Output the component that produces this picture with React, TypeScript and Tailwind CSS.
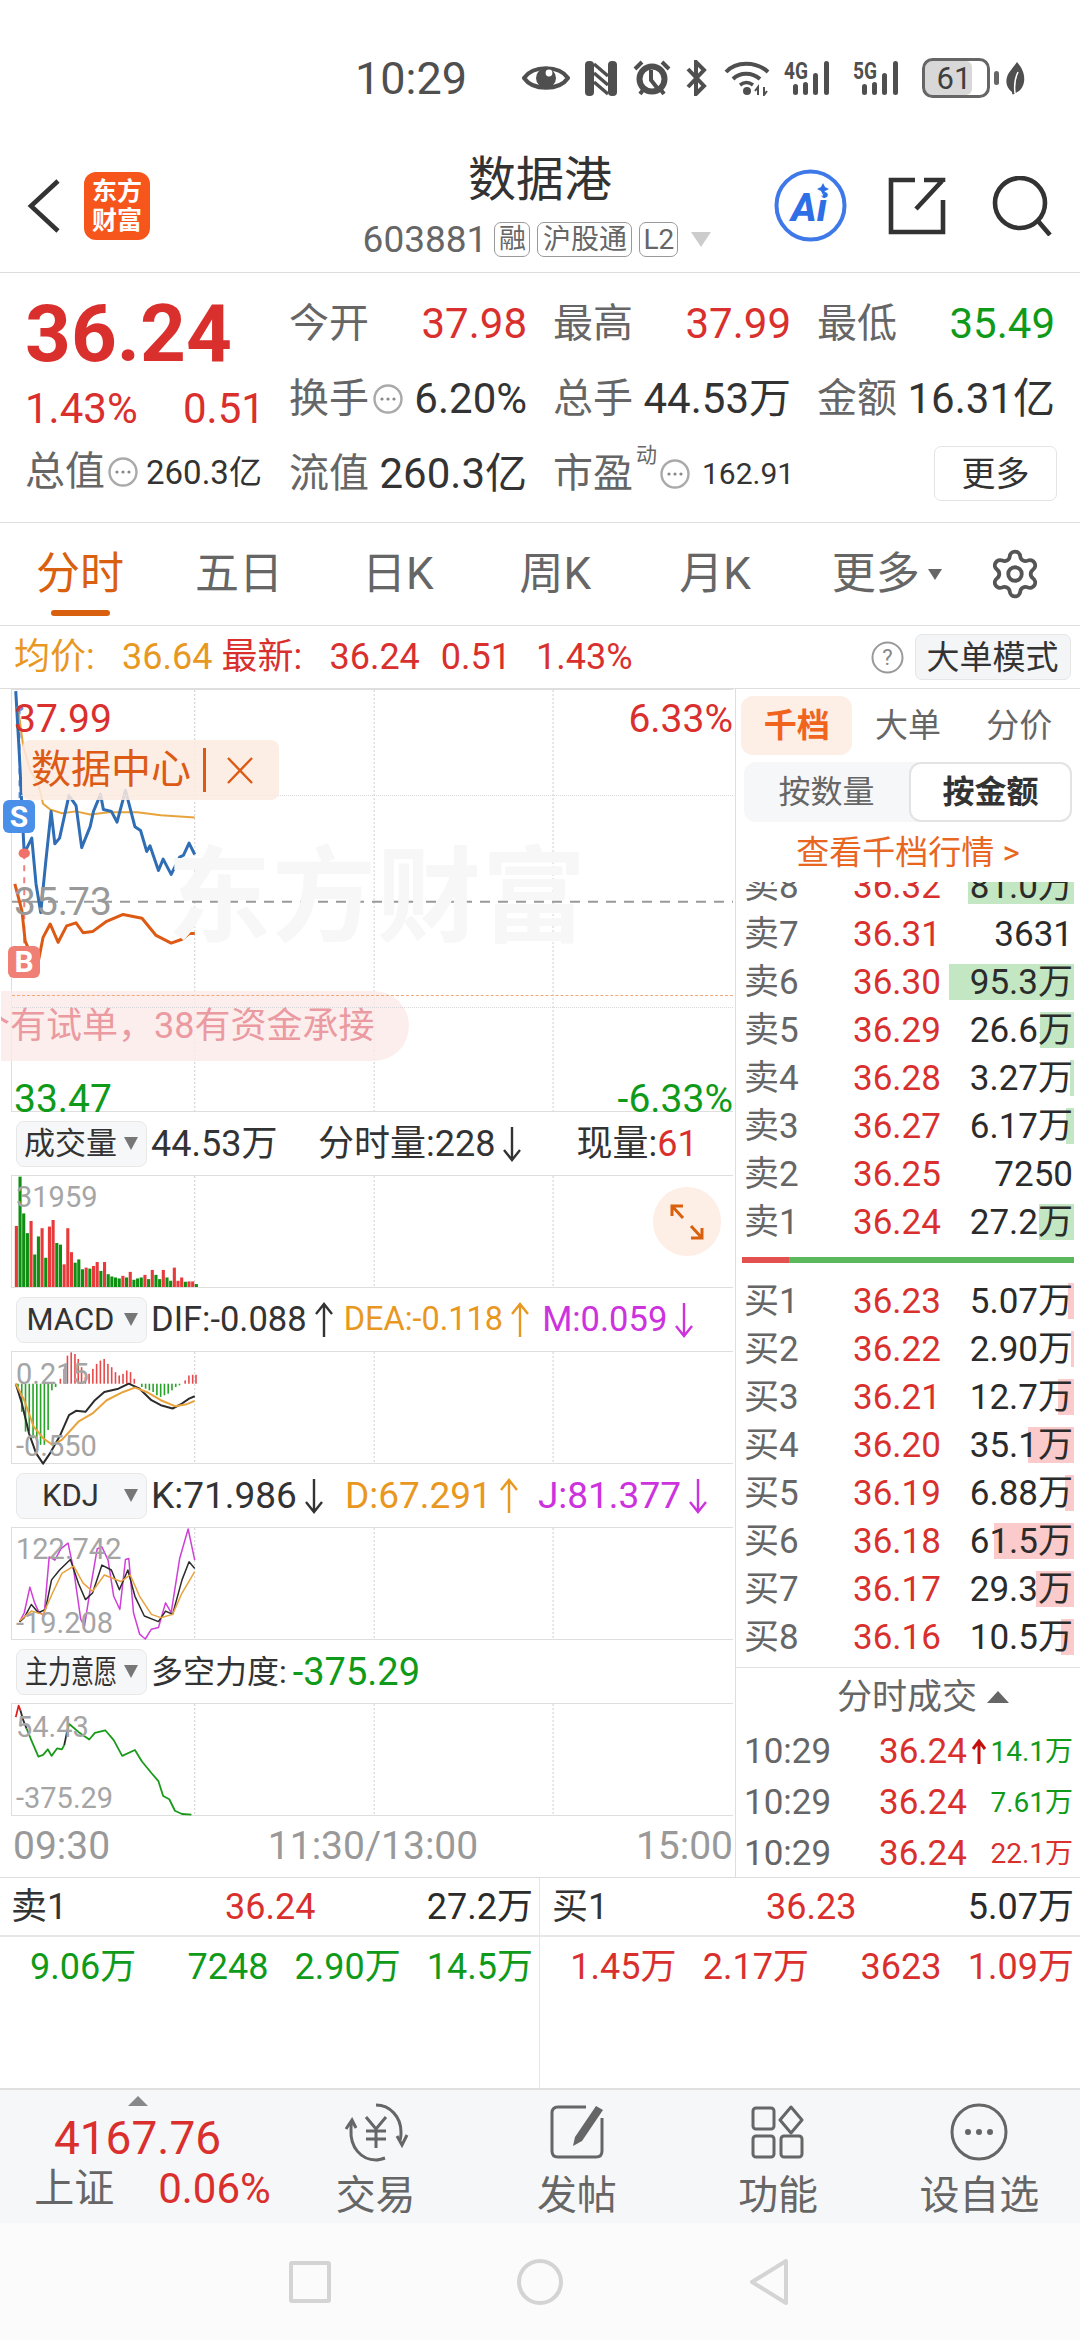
import React from 'react';
import { Settings } from 'lucide-react';

const RED = 'text-[#d9302e]';
const GREEN = 'text-[#0f9a1a]';

function Dots({ size = 30 }: { size?: number }) {
  return (
    <svg width={size} height={size} viewBox="0 0 30 30" className="shrink-0">
      <circle cx="15" cy="15" r="13.5" fill="#fff" stroke="#aaa" strokeWidth="2.4" />
      <circle cx="9" cy="15" r="1.6" fill="#888" />
      <circle cx="15" cy="15" r="1.6" fill="#888" />
      <circle cx="21" cy="15" r="1.6" fill="#888" />
    </svg>
  );
}

function Arrow({ up = false, color = '#333' }: { up?: boolean; color?: string }) {
  return (
    <svg width="22" height="38" viewBox="0 0 22 38" className="ml-[6px] shrink-0">
      {up ? (
        <path d="M11 36V3M3 13L11 3L19 13" fill="none" stroke={color} strokeWidth="2.4" />
      ) : (
        <path d="M11 2V35M3 25L11 35L19 25" fill="none" stroke={color} strokeWidth="2.4" />
      )}
    </svg>
  );
}

function Chip({ label, squeeze = false }: { label: string; squeeze?: boolean }) {
  return (
    <div className="ml-[16px] mr-[4px] flex h-[46px] w-[131px] shrink-0 items-center rounded-[8px] border border-[#e8e8e8] bg-[#f6f7f9] pl-[7px] text-[31px] leading-none text-[#333]">
      <span className="flex w-[93px] justify-center whitespace-nowrap">
        <span className={squeeze ? 'inline-block shrink-0 scale-x-[0.72] text-[32px]' : 'inline-block shrink-0'}>{label}</span>
      </span>
      <span className="ml-[7px] h-0 w-0 border-x-[7px] border-t-[13px] border-x-transparent border-t-[#777]" />
    </div>
  );
}

function Chart({
  minY,
  maxY,
  h,
  children,
  labels,
}: {
  minY: number;
  maxY: number;
  h: string;
  children?: React.ReactNode;
  labels?: React.ReactNode;
}) {
  return (
    <div className={`relative ml-[11px] w-[722px] border-y border-l border-y-[#dedede] border-l-[#dedede] ${h}`}>
      <svg
        className="block h-full w-full overflow-visible"
        viewBox={`24 ${minY} 1531 ${maxY - minY}`}
        preserveAspectRatio="none"
      >
        {[412, 793, 1173].map((x) => (
          <line key={x} x1={x} x2={x} y1={minY} y2={maxY} stroke="#cfcfcf" strokeWidth="1" strokeDasharray="2 2" vectorEffect="non-scaling-stroke" />
        ))}
        {children}
      </svg>
      {labels}
    </div>
  );
}

function L({ p, c, w = 2 }: { p: string; c: string; w?: number }) {
  return <polyline points={p} fill="none" stroke={c} strokeWidth={w} strokeLinejoin="round" vectorEffect="non-scaling-stroke" />;
}

const volBars: [number, string][] = [
  [348, 'r'], [198, 'g'], [310, 'g'], [370, 'g'], [333, 'r'], [435, 'g'], [380, 'g'], [355, 'r'], [445, 'g'], [350, 'r'],
  [330, 'r'], [400, 'g'], [405, 'g'], [465, 'r'], [355, 'r'], [428, 'r'], [460, 'g'], [450, 'g'], [480, 'g'], [475, 'r'],
  [478, 'g'], [470, 'r'], [458, 'r'], [485, 'g'], [458, 'r'], [495, 'g'], [502, 'g'], [505, 'g'], [508, 'g'], [500, 'r'],
  [505, 'g'], [488, 'r'], [512, 'g'], [508, 'g'], [505, 'g'], [497, 'r'], [510, 'g'], [482, 'r'], [497, 'g'], [510, 'g'],
  [482, 'r'], [505, 'g'], [515, 'g'], [475, 'r'], [515, 'r'], [505, 'r'], [518, 'g'], [517, 'r'], [517, 'r'], [525, 'g'],
];

const macdBars: [number, number][] = [
  [35, 830], [43, 905], [51, 965], [59, 965], [67, 985], [75, 985], [83, 1005], [91, 1005], [99, 960], [107, 840], [115, 830],
  [125, 805], [133, 775], [140, 735], [148, 725], [156, 730], [163, 745], [170, 770], [178, 800], [186, 790], [194, 775],
  [202, 760], [210, 750], [218, 745], [226, 760], [234, 770], [242, 785], [250, 795], [258, 790], [266, 780], [274, 785], [282, 805],
  [298, 830], [306, 835], [314, 840], [322, 845], [330, 855], [338, 860], [346, 855], [354, 850], [362, 840], [370, 830], [378, 825],
  [390, 810], [398, 795], [406, 793], [413, 793],
];

const sells: [string, string, string, number][] = [
  ['卖8', '36.32', '81.0万', 106],
  ['卖7', '36.31', '3631', 0],
  ['卖6', '36.30', '95.3万', 125],
  ['卖5', '36.29', '26.6万', 34],
  ['卖4', '36.28', '3.27万', 4],
  ['卖3', '36.27', '6.17万', 8],
  ['卖2', '36.25', '7250', 0],
  ['卖1', '36.24', '27.2万', 35],
];
const buys: [string, string, string, number][] = [
  ['买1', '36.23', '5.07万', 6],
  ['买2', '36.22', '2.90万', 3],
  ['买3', '36.21', '12.7万', 16],
  ['买4', '36.20', '35.1万', 46],
  ['买5', '36.19', '6.88万', 9],
  ['买6', '36.18', '61.5万', 80],
  ['买7', '36.17', '29.3万', 38],
  ['买8', '36.16', '10.5万', 13],
  ['', '', '', 14],
];

function BookRow({ r, barClass }: { r: [string, string, string, number]; barClass: string }) {
  return (
    <div className="relative flex h-[48px] items-center pl-[8px] pr-[7px] text-[35px] leading-none">
      {r[3] > 0 && (
        <div className={`absolute bottom-[6px] right-[6px] top-[6px] ${barClass}`} style={{ width: r[3] }} />
      )}
      <span className="relative w-[109px] text-[#666]">{r[0]}</span>
      <span className={`relative w-[90px] ${RED}`}>{r[1]}</span>
      <span className="relative flex-1 text-right text-[#2b2b2b]">{r[2]}</span>
    </div>
  );
}

function Trade({ vol, color, arrow }: { vol: string; color: string; arrow?: boolean }) {
  return (
    <div className="flex h-[51px] items-center pl-[8px] pr-[7px] leading-none">
      <span className="w-[135px] text-[35px] text-[#666]">10:29</span>
      <span className={`w-[91px] text-[35px] ${RED}`}>36.24</span>
      <span className="flex w-[18px] justify-center">
        {arrow && (
          <svg width="16" height="26" viewBox="0 0 16 26">
            <path d="M8 25V3M2 10L8 2L14 10" fill="none" stroke="#c40e0e" strokeWidth="3" />
          </svg>
        )}
      </span>
      <span className={`flex-1 text-right text-[28px] ${color}`}>{vol}</span>
    </div>
  );
}

function StatusBar() {
  return (
    <div className="flex h-[145px] shrink-0 items-center justify-end pr-[55px] pt-[11px] text-[#4f4f4f]">
      <span className="mr-[55px] text-[45px] leading-none">10:29</span>
      <svg width="48" height="32" viewBox="0 0 48 32" className="mr-[15px]">
        <path d="M2 16C11 3 37 3 46 16C37 29 11 29 2 16Z" fill="none" stroke="#4f4f4f" strokeWidth="4" />
        <circle cx="24" cy="16" r="10" fill="#4f4f4f" />
        <circle cx="27" cy="11" r="3.4" fill="#fff" />
      </svg>
      <svg width="32" height="35" viewBox="0 0 32 35" className="mr-[16px]">
        <rect x="0" y="0" width="9" height="35" rx="4" fill="#4f4f4f" />
        <rect x="23" y="0" width="9" height="35" rx="4" fill="#4f4f4f" />
        <path d="M9 3L23 15M9 12L23 24M9 21L23 33" stroke="#4f4f4f" strokeWidth="3.4" />
      </svg>
      <svg width="38" height="36" viewBox="0 0 38 36" className="mr-[14px]">
        <circle cx="19" cy="19" r="12.5" fill="none" stroke="#4f4f4f" strokeWidth="6" />
        <path d="M18 10V20L25 29" fill="none" stroke="#4f4f4f" strokeWidth="4" />
        <path d="M2 9L9 2M36 9L29 2M7 34L10 30M31 34L28 30" stroke="#4f4f4f" strokeWidth="4" />
      </svg>
      <svg width="23" height="36" viewBox="0 0 23 36" className="mr-[16px]">
        <path d="M3 9L19 26L11 34V2L19 10L3 27" fill="none" stroke="#4f4f4f" strokeWidth="4" />
      </svg>
      <svg width="46" height="36" viewBox="0 0 46 36" className="mr-[14px]">
        <path d="M2 12C12 1 32 1 44 12" fill="none" stroke="#4f4f4f" strokeWidth="4" />
        <path d="M9 19C16 12 28 12 36 19" fill="none" stroke="#4f4f4f" strokeWidth="4" />
        <path d="M16 25C20 22 25 22 29 25" fill="none" stroke="#4f4f4f" strokeWidth="3.5" />
        <circle cx="23" cy="31" r="4" fill="#4f4f4f" />
        <path d="M34 35V27L31 31M40 27V35L43 31" fill="none" stroke="#4f4f4f" strokeWidth="2" />
      </svg>
      {['4G', '5G'].map((t) => (
        <svg key={t} width="53" height="36" viewBox="0 0 53 36" className="mr-[16px]">
          <text x="0" y="19" fontSize="24" fontWeight="700" fill="#4f4f4f" fontFamily="Roboto, sans-serif" textLength="24" lengthAdjust="spacingAndGlyphs">
            {t}
          </text>
          <rect x="9" y="24" width="5" height="11" rx="2.5" fill="#4f4f4f" />
          <rect x="19" y="22" width="5" height="13" rx="2.5" fill="#4f4f4f" />
          <rect x="29" y="13" width="5" height="22" rx="2.5" fill="#4f4f4f" />
          <rect x="40" y="1" width="5" height="34" rx="2.5" fill="#4f4f4f" />
        </svg>
      ))}
      <svg width="68" height="40" viewBox="0 0 68 40" className="mr-[4px]">
        <rect x="3" y="3" width="47" height="34" rx="6" fill="#d8d8d8" />
        <rect x="1.5" y="1.5" width="65" height="37" rx="9" fill="none" stroke="#666" strokeWidth="3" />
        <text x="32" y="31" textAnchor="middle" fontSize="31" fill="#3f3f3f" fontFamily="Roboto, sans-serif">61</text>
      </svg>
      <span className="mr-[6px] h-[14px] w-[5px] rounded-full bg-[#666]" />
      <svg width="20" height="34" viewBox="0 0 20 34">
        <path d="M12 1C18 8 20 14 19 21C18 27 14 31 10 32C8 34 7 34 7 31C3 28 0 23 2 16C4 10 9 6 12 1Z" fill="#4f4f4f" />
        <path d="M10 32C9 24 10 17 13 11" fill="none" stroke="#fff" strokeWidth="1.5" />
      </svg>
    </div>
  );
}

function Header() {
  return (
    <div className="grid h-[128px] shrink-0 grid-cols-[1fr_auto_1fr] items-start border-b border-[#dcdcdc]">
      <div className="flex items-center pl-[27px] pt-[27px]">
        <svg width="34" height="56" viewBox="0 0 34 56">
          <path d="M31 3L4 28L31 53" fill="none" stroke="#333" strokeWidth="4.6" />
        </svg>
        <div className="ml-[23px] flex h-[68px] w-[66px] flex-col items-center justify-center rounded-[12px] bg-[#f6551c] text-[25px] font-bold leading-[29px] text-white">
          <span>东方</span>
          <span>财富</span>
        </div>
      </div>
      <div className="flex flex-col items-center pt-[5px]">
        <div className="text-[48px] leading-[60px] text-[#333]">数据港</div>
        <div className="mt-[12px] flex h-[35px] -translate-x-[3px] items-center text-[#666]">
          <span className="mr-[7px] text-[37px] leading-none">603881</span>
          <span className="mr-[7px] flex h-[35px] w-[36px] items-center justify-center rounded-[7px] border border-[#999] text-[27px] leading-none">融</span>
          <span className="mr-[7px] flex h-[35px] w-[95px] items-center justify-center rounded-[7px] border border-[#999] text-[28px] leading-none">沪股通</span>
          <span className="mr-[13px] flex h-[35px] w-[39px] items-center justify-center rounded-[7px] border border-[#999] text-[28px] leading-none">L2</span>
          <span className="h-0 w-0 border-x-[10px] border-t-[15px] border-x-transparent border-t-[#ccc]" />
        </div>
      </div>
      <div className="flex items-center justify-end pr-[28px] pt-[24px]">
        <svg width="73" height="73" viewBox="0 0 73 73" className="mr-[41px]">
          <circle cx="36.5" cy="36.5" r="34" fill="#fff" stroke="#3f78e8" strokeWidth="4" />
          <text x="35" y="52" textAnchor="middle" fontSize="39" fontWeight="800" fontStyle="italic" fill="#2f6fe6" fontFamily="Roboto, sans-serif">Ai</text>
          <path d="M48 12L50.5 17.5L56 20L50.5 22.5L48 28L45.5 22.5L40 20L45.5 17.5Z" fill="#fff" />
          <path d="M49 14L51 18L55 20L51 22L49 26L47 22L43 20L47 18Z" fill="#2f6fe6" />
        </svg>
        <svg width="58" height="58" viewBox="0 0 58 58" className="mr-[46px]">
          <path d="M27 3H3V55H55V23" fill="none" stroke="#333" strokeWidth="4.6" />
          <path d="M28 32L54 4M36 3H55V5" fill="none" stroke="#333" strokeWidth="4.6" />
        </svg>
        <svg width="60" height="60" viewBox="0 0 60 60">
          <circle cx="28" cy="27" r="25" fill="none" stroke="#333" strokeWidth="4.6" />
          <path d="M46 45L58 59" stroke="#333" strokeWidth="4.6" />
        </svg>
      </div>
    </div>
  );
}

function Cell({ label, value, extra, vc }: { label: string; value: string; extra?: React.ReactNode; vc?: string }) {
  return (
    <div className="flex h-[75px] w-[238px] items-center justify-between whitespace-nowrap leading-none">
      <span className="flex items-center text-[40px] text-[#666]">
        {label}
        {extra}
      </span>
      <span className={`text-[42px] ${vc ?? 'text-[#333]'}`}>{value}</span>
    </div>
  );
}

function InfoPanel() {
  return (
    <div className="flex h-[250px] shrink-0 border-b border-[#dedede] pl-[25px]">
      <div className="w-[264px]">
        <div className={`flex h-[103px] items-end text-[80px] font-bold leading-[84px] ${RED}`}>
          <span>36.24</span>
        </div>
        <div className={`flex h-[65px] items-center text-[42px] leading-none ${RED}`}>
          <span className="w-[158px]">1.43%</span>
          <span>0.51</span>
        </div>
        <div className="flex h-[62px] items-center whitespace-nowrap leading-none">
          <span className="text-[40px] text-[#666]">总值</span>
          <span className="ml-[3px]"><Dots /></span>
          <span className="ml-[8px] text-[33px] text-[#333]">260.3亿</span>
        </div>
      </div>
      <div className="pt-[13px]">
        <div className="flex gap-x-[26px]">
          <Cell label="今开" value="37.98" vc={RED} />
          <Cell label="最高" value="37.99" vc={RED} />
          <Cell label="最低" value="35.49" vc={GREEN} />
        </div>
        <div className="flex gap-x-[26px]">
          <Cell label="换手" value="6.20%" extra={<span className="ml-[4px]"><Dots /></span>} />
          <Cell label="总手" value="44.53万" />
          <Cell label="金额" value="16.31亿" />
        </div>
        <div className="flex gap-x-[26px]">
          <Cell label="流值" value="260.3亿" />
          <div className="flex h-[75px] w-[238px] items-center whitespace-nowrap leading-none">
            <span className="relative shrink-0 text-[40px] text-[#666]">
              市盈
              <span className="absolute -right-[24px] -top-[9px] text-[21px] text-[#666]">动</span>
            </span>
            <span className="ml-[27px]"><Dots /></span>
            <span className="ml-[12px] text-[30px] text-[#333]">162.91</span>
          </div>
          <div className="flex h-[75px] w-[238px] items-center justify-end">
            <span className="-mr-[2px] flex h-[55px] w-[123px] items-center justify-center rounded-[7px] border border-[#e4e4e4] text-[34px] leading-none text-[#333]">更多</span>
          </div>
        </div>
      </div>
    </div>
  );
}

function Tabs() {
  return (
    <div className="relative flex h-[103px] shrink-0 items-center border-b border-[#dedede] text-[44px] leading-none text-[#666]">
      <div className="relative ml-[36px] mr-[71px] text-[#d9600f]">
        分时
        <div className="absolute -bottom-[20px] left-[15px] h-[6px] w-[59px] rounded-full bg-[#d9600f]" />
      </div>
      <span className="mr-[79px]">五日</span>
      <span className="mr-[86px]">日K</span>
      <span className="mr-[88px]">周K</span>
      <span className="mr-[81px]">月K</span>
      <span>更多</span>
      <span className="ml-[8px] h-0 w-0 border-x-[7px] border-t-[11px] border-x-transparent border-t-[#666]" />
      <Settings className="ml-[46px]" size={54} strokeWidth={1.7} color="#555" />
    </div>
  );
}

function SubLine() {
  return (
    <div className="flex h-[63px] shrink-0 items-center border-b border-[#dedede] pl-[14px] text-[36px] leading-none">
      <span className="w-[108px] text-[#e8981f]">均价:</span>
      <span className="mr-[9px] text-[#e8981f]">36.64</span>
      <span className={`w-[108px] ${RED}`}>最新:</span>
      <span className={`mr-[21px] ${RED}`}>36.24</span>
      <span className={`mr-[25px] ${RED}`}>0.51</span>
      <span className={RED}>1.43%</span>
      <svg width="33" height="33" viewBox="0 0 33 33" className="ml-[238px]">
        <circle cx="16.5" cy="16.5" r="15" fill="none" stroke="#999" strokeWidth="2" />
        <text x="16.5" y="24" textAnchor="middle" fontSize="22" fill="#888" fontFamily="Roboto, sans-serif">?</text>
      </svg>
      <span className="ml-[11px] flex h-[46px] w-[156px] items-center justify-center rounded-[7px] border border-[#e6e6e6] bg-[#f4f5f7] text-[33px] text-[#333]">大单模式</span>
    </div>
  );
}

const LBL = 'absolute left-[4px] -translate-y-1/2 text-[29px] leading-none text-[#a5a5a5]';

function LeftColumn() {
  return (
    <div className="w-[736px] shrink-0 border-r border-[#dedede]">
      {/* main chart */}
      <Chart
        minY={442}
        maxY={1545}
        h="h-[423px]"
        labels={
          <>
            <div className="absolute left-[9px] right-0 top-[105px] border-t border-dotted border-[#d8d8d8]" />
            <div className="absolute left-[155px] top-[157px] whitespace-nowrap text-[104px] font-bold leading-none tracking-[1px] text-[#f7f7f7]">东方财富</div>
            <div className={`absolute left-[2px] top-[29px] -translate-y-1/2 text-[39px] leading-none ${RED}`}>37.99</div>
            <div className="absolute left-[2px] top-[212px] -translate-y-1/2 text-[39px] leading-none text-[#999]">35.73</div>
            <div className={`absolute left-[2px] top-[409px] -translate-y-1/2 text-[39px] leading-none ${GREEN}`}>33.47</div>
            <div className={`absolute right-0 top-[29px] -translate-y-1/2 text-[39px] leading-none ${RED}`}>6.33%</div>
            <div className={`absolute right-0 top-[409px] -translate-y-1/2 text-[39px] leading-none ${GREEN}`}>-6.33%</div>
            <div className="absolute left-[10px] top-[50px] flex h-[60px] w-[257px] items-center rounded-[8px] bg-[#fdebe0]/85 pl-[9px] text-[40px] leading-none text-[#dc5a14]">
              数据中心
              <span className="ml-[12px] h-[44px] w-[3px] bg-[#dc5a14]" />
              <svg width="28" height="30" viewBox="0 0 28 30" className="ml-[20px]">
                <path d="M2 3L26 28M26 3L2 28" stroke="#dc5a14" strokeWidth="2.4" />
              </svg>
            </div>
            <div className="absolute -left-[9px] top-[110px] flex h-[33px] w-[32px] items-center justify-center rounded-[6px] bg-[#4a8fe8] text-[30px] font-bold leading-none text-white">S</div>
            <div className="absolute -left-[4px] top-[256px] flex h-[32px] w-[32px] items-center justify-center rounded-[6px] bg-[#f08076] text-[30px] font-bold leading-none text-white">B</div>
            <div className="absolute -left-[11px] top-[301px] flex h-[70px] w-[408px] items-center overflow-hidden rounded-r-[35px] bg-[#fdeaea]/80">
              <span className="-ml-[27px] whitespace-nowrap text-[36px] leading-none text-[#ea9aa0]">个有试单，38有资金承接</span>
            </div>
            <div className="absolute left-0 right-0 top-[317px] border-t border-dotted border-[#d8d8d8]" />
            <div className="absolute left-0 right-0 top-[305px] border-t border-dashed border-[#f0a878]" />
          </>
        }
      >
        <line x1="24" x2="1555" y1="997" y2="997" stroke="#999" strokeWidth="2" strokeDasharray="10 8" vectorEffect="non-scaling-stroke" />
        <line x1="40" x2="40" y1="490" y2="730" stroke="#5b8fe0" strokeWidth="2" strokeDasharray="6 6" vectorEffect="non-scaling-stroke" />
        <line x1="50" x2="50" y1="870" y2="1110" stroke="#f08080" strokeWidth="2" strokeDasharray="6 6" vectorEffect="non-scaling-stroke" />
        <L c="#e8a33d" w={2} p="38,500 48,590 62,650 80,690 90,740 105,755 130,765 160,760 190,768 230,762 290,762 340,770 412,776" />
        <L c="#2f6db5" w={3} p="32,445 40,620 47,800 50,870 66,830 75,950 85,1025 95,900 107,760 115,845 125,830 145,718 160,745 172,855 190,800 197,760 212,715 218,755 235,760 247,788 265,705 285,800 297,810 310,865 317,850 335,915 345,885 362,925 380,880 388,875 400,843 412,873" />
        <L c="#dc5a14" w={3} p="30,950 45,1020 52,1100 70,1150 78,1165 90,1090 105,1055 122,1103 140,1060 160,1052 175,1078 195,1075 225,1048 260,1030 300,1040 330,1085 362,1105 385,1095 400,1080 412,1080" />
        <ellipse cx="40" cy="490" rx="8" ry="7" fill="#5b8fe0" />
        <ellipse cx="50" cy="870" rx="12" ry="13" fill="#f0706a" />
      </Chart>

      {/* volume */}
      <div className="flex h-[63px] items-center text-[36px] leading-none text-[#333]">
        <Chip label="成交量" />
        <span className="w-[127px] whitespace-nowrap">44.53万</span>
        <span className="ml-[40px] whitespace-nowrap">分时量:228</span>
        <Arrow />
        <span className="ml-[53px] whitespace-nowrap">现量:<span className={RED}>61</span></span>
      </div>
      <Chart
        minY={196}
        maxY={534}
        h="h-[113px]"
        labels={
          <>
            <div className={`${LBL} top-[21px]`}>31959</div>
            <div className="absolute left-[641px] top-[11px] flex h-[69px] w-[68px] items-center justify-center rounded-full bg-[#fdeee6]">
              <svg width="36" height="36" viewBox="0 0 36 36">
                <path d="M3 12V2H14M3 2L14 14M33 24V34H22M33 34L22 22" fill="none" stroke="#d9600f" strokeWidth="3" />
              </svg>
            </div>
          </>
        }
      >
        {volBars.map(([t, c], i) => (
          <rect key={i} x={30 + i * 7.8} y={t} width="6.6" height={534 - t} fill={c === 'r' ? '#e83a3a' : '#0f8f12'} />
        ))}
      </Chart>

      {/* MACD */}
      <div className="flex h-[63px] items-center whitespace-nowrap text-[34.5px] leading-none">
        <Chip label="MACD" />
        <span className="text-[#333]">DIF:-0.088</span>
        <Arrow up color="#333" />
        <span className="ml-[9px] text-[32.5px] text-[#e8981f]">DEA:-0.118</span>
        <Arrow up color="#e8981f" />
        <span className="ml-[11px] text-[#cc33dd]">M:0.059</span>
        <Arrow color="#cc33dd" />
      </div>
      <Chart
        minY={724}
        maxY={1060}
        h="h-[113px]"
        labels={
          <>
            <div className={`${LBL} top-[22px]`}>0.215</div>
            <div className={`${LBL} top-[94px]`}>-0.550</div>
          </>
        }
      >
        {macdBars.map(([x, y]) => (
          <rect key={x} x={x} y={Math.min(y, 820)} width="3.4" height={Math.abs(y - 820)} fill={y > 820 ? '#28a428' : '#e84a4a'} />
        ))}
        <L c="#2b2b2b" w={2} p="32,820 45,880 60,970 75,1030 90,1062 105,1030 125,980 145,915 160,902 180,905 200,870 220,845 250,835 272,820 295,835 320,870 340,885 365,895 385,880 400,865 412,858" />
        <L c="#e8a33d" w={2} p="32,820 50,870 70,950 90,985 110,1005 130,990 165,935 195,910 225,870 260,845 285,832 310,845 340,870 370,888 395,882 412,872" />
      </Chart>

      {/* KDJ */}
      <div className="flex h-[63px] items-center whitespace-nowrap text-[37px] leading-none">
        <Chip label="KDJ" />
        <span className="text-[#333]">K:71.986</span>
        <Arrow />
        <span className="ml-[20px] text-[#e8981f]">D:67.291</span>
        <Arrow up color="#e8981f" />
        <span className="ml-[18px] text-[#cc33dd]">J:81.377</span>
        <Arrow color="#cc33dd" />
      </div>
      <Chart
        minY={142}
        maxY={480}
        h="h-[113px]"
        labels={
          <>
            <div className={`${LBL} top-[21px]`}>122.742</div>
            <div className={`${LBL} top-[95px]`}>-19.208</div>
          </>
        }
      >
        <L c="#d03fd8" w={1.5} p="40,428 50,400 62,322 72,370 80,395 92,410 103,230 115,240 128,205 143,188 155,270 170,420 178,440 190,330 205,205 215,200 228,240 240,350 253,390 265,238 272,235 282,400 295,465 307,480 320,450 335,445 350,370 362,400 380,235 398,145 412,240" />
        <L c="#2b2b2b" w={1.5} p="40,428 50,415 65,375 80,400 95,390 108,300 125,270 148,238 165,310 180,360 195,340 215,255 235,270 252,330 270,270 285,350 305,410 335,427 350,395 365,405 385,300 400,245 412,265" />
        <L c="#e8a33d" w={1.5} p="40,425 65,395 90,405 110,340 130,280 155,258 175,310 195,335 220,285 255,305 275,285 295,350 320,405 340,415 365,405 385,340 412,275" />
      </Chart>

      {/* main force */}
      <div className="flex h-[63px] items-center whitespace-nowrap leading-none">
        <Chip label="主力意愿" squeeze />
        <span className="text-[32px] text-[#333]">多空力度:</span>
        <span className={`ml-[6px] text-[38px] ${GREEN}`}>-375.29</span>
      </div>
      <Chart
        minY={670}
        maxY={1008}
        h="h-[113px]"
        labels={
          <>
            <div className={`${LBL} top-[23px]`}>54.43</div>
            <div className={`${LBL} top-[94px]`}>-375.29</div>
          </>
        }
      >
        <L c="#e02020" w={1.8} p="32,710 38,675 42,690" />
        <L c="#2b2b2b" w={1.8} p="42,690 48,720 55,745" />
        <L c="#1a9a1a" w={1.8} p="55,745 65,780 80,830 90,825 100,808 108,828 120,805 130,808 135,795" />
        <L c="#2b2b2b" w={1.8} p="135,795 140,760 145,730" />
        <L c="#1a9a1a" w={1.8} p="145,730 165,755 188,778 200,758 222,750 240,780 258,828 285,810 300,845 320,880 335,905 345,950 358,960 370,995 385,1005 405,1007" />
      </Chart>

      {/* times */}
      <div className="flex h-[60px] items-center justify-between pl-[13px] pr-[2px] text-[39px] leading-none text-[#999]">
        <span>09:30</span>
        <span>11:30/13:00</span>
        <span>15:00</span>
      </div>
    </div>
  );
}

function RightColumn() {
  return (
    <div className="flex-1">
      <div className="grid grid-cols-3 px-[5px] pt-[7px] text-[33px] leading-none text-[#666]">
        <div className="flex h-[59px] items-center justify-center rounded-[12px] bg-[#fdeee6] font-bold text-[#f0641e]">千档</div>
        <div className="flex h-[59px] items-center justify-center">大单</div>
        <div className="flex h-[59px] items-center justify-center">分价</div>
      </div>
      <div className="mx-[8px] mt-[7px] flex h-[60px] rounded-[12px] bg-[#f6f7f9] text-[32px] leading-none">
        <div className="flex flex-1 items-center justify-center text-[#666]">按数量</div>
        <div className="flex w-[163px] items-center justify-center rounded-[12px] border-2 border-[#e3e3e3] bg-white font-bold text-[#333]">按金额</div>
      </div>
      <div className="flex h-[60px] items-center justify-center whitespace-pre text-[33px] leading-none text-[#e8661f]">查看千档行情 &gt;</div>
      <div className="h-[364px] overflow-hidden">
        <div className="-mt-[20px]">
          {sells.map((r) => (
            <BookRow key={r[0]} r={r} barClass="bg-[#c3e6c3]" />
          ))}
        </div>
      </div>
      <div className="mx-[6px] mt-[11px] flex h-[6px]">
        <div className="w-[47px] bg-[#e35050]" />
        <div className="flex-1 bg-[#5cb85c]" />
      </div>
      <div className="mt-[14px] h-[391px] overflow-hidden border-b border-[#e2e2e2]">
        {buys.map((r, i) => (
          <BookRow key={i} r={r} barClass="bg-[#fbcaca]" />
        ))}
      </div>
      <div className="flex h-[58px] items-center justify-center pl-[30px] text-[35px] leading-none text-[#666]">
        分时成交
        <span className="ml-[10px] h-0 w-0 border-x-[11px] border-b-[12px] border-x-transparent border-b-[#666]" />
      </div>
      <Trade vol="14.1万" color={GREEN} arrow />
      <Trade vol="7.61万" color={GREEN} />
      <Trade vol="22.1万" color={RED} />
    </div>
  );
}

function Summary() {
  return (
    <div className="flex h-[211px] shrink-0 border-t border-[#dedede] text-[36px] leading-none">
      {[
        { a: '卖1', p: '36.24', v: '27.2万', row: ['9.06万', '7248', '2.90万', '14.5万'], c: GREEN, pl: 'pl-[11px]' },
        { a: '买1', p: '36.23', v: '5.07万', row: ['1.45万', '2.17万', '3623', '1.09万'], c: RED, pl: 'pl-[12px]' },
      ].map((b, i) => (
        <div key={b.a} className={`w-[540px] ${i === 0 ? 'border-r border-[#e6e6e6]' : ''}`}>
          <div className={`flex h-[59px] items-center border-b-2 border-[#e6e6e6] pr-[6px] ${b.pl}`}>
            <span className="w-[214px] text-[#333]">{b.a}</span>
            <span className={RED}>{b.p}</span>
            <span className="flex-1 text-right text-[#2b2b2b]">{b.v}</span>
          </div>
          <div className={`grid h-[59px] grid-cols-4 items-center pl-[4px] pr-[6px] ${b.c}`}>
            {b.row.map((x) => (
              <span key={x} className="text-right">{x}</span>
            ))}
          </div>
        </div>
      ))}
    </div>
  );
}

function TabItem({ label, icon }: { label: string; icon: React.ReactNode }) {
  return (
    <div className="flex flex-col items-center">
      <div className="flex h-[72px] items-center justify-center">{icon}</div>
      <div className="mt-[3px] text-[40px] leading-[50px] text-[#666]">{label}</div>
    </div>
  );
}

function TabBar() {
  return (
    <div className="grid h-[135px] shrink-0 grid-cols-[275px_repeat(4,1fr)] border-t-2 border-[#e0e0e0] bg-[#f6f7f9] pt-[6px]">
      <div className="flex flex-col items-center leading-none">
        <span className="h-0 w-0 border-x-[10px] border-b-[10px] border-x-transparent border-b-[#888]" />
        <span className={`mt-[9px] text-[46px] ${RED}`}>4167.76</span>
        <div className="mt-[7px] flex items-center pl-[30px]">
          <span className="text-[40px] text-[#666]">上证</span>
          <span className={`ml-[44px] text-[42px] ${RED}`}>0.06%</span>
        </div>
      </div>
      <TabItem
        label="交易"
        icon={
          <svg width="66" height="60" viewBox="0 0 66 60">
            <path d="M33 3C47 3 58 15 58 30C58 33 58 36 57 38" fill="none" stroke="#666" strokeWidth="3" />
            <path d="M42 56C39 57 36 58 33 58C18 58 7 45 8 28C8 24 8 22 9 20" fill="none" stroke="#666" strokeWidth="3" />
            <path d="M3 27L9 18L13 26M54 34L59 43L64 33" fill="none" stroke="#666" strokeWidth="3" />
            <path d="M23 15L33 27L43 15M33 27V46M23 29H43M23 37H43" fill="none" stroke="#666" strokeWidth="3" />
          </svg>
        }
      />
      <TabItem
        label="发帖"
        icon={
          <svg width="56" height="56" viewBox="0 0 56 56">
            <path d="M37 3H9C5 3 3 5 3 9V47C3 51 5 53 9 53H47C51 53 53 51 53 47V14" fill="none" stroke="#666" strokeWidth="3" />
            <path d="M47 2L54 6L33 37L24 42L26 33Z" fill="#666" />
          </svg>
        }
      />
      <TabItem
        label="功能"
        icon={
          <svg width="54" height="54" viewBox="0 0 54 54">
            <rect x="2" y="3" width="21" height="21" rx="3" fill="none" stroke="#666" strokeWidth="3" />
            <rect x="2" y="31" width="21" height="21" rx="3" fill="none" stroke="#666" strokeWidth="3" />
            <rect x="30" y="31" width="21" height="21" rx="3" fill="none" stroke="#666" strokeWidth="3" />
            <path d="M40 2L51 15L40 28L29 15Z" fill="none" stroke="#666" strokeWidth="3" strokeLinejoin="round" />
          </svg>
        }
      />
      <TabItem
        label="设自选"
        icon={
          <svg width="58" height="58" viewBox="0 0 58 58">
            <circle cx="29" cy="29" r="27" fill="none" stroke="#666" strokeWidth="3" />
            <circle cx="18" cy="29" r="3" fill="#666" />
            <circle cx="29" cy="29" r="3" fill="#666" />
            <circle cx="40" cy="29" r="3" fill="#666" />
          </svg>
        }
      />
    </div>
  );
}

function NavBar() {
  return (
    <div className="flex h-[117px] shrink-0 items-center justify-center gap-x-[186px] bg-[#fbfbfb] pr-[3px]">
      <div className="h-[42px] w-[42px] rounded-[3px] border-[4px] border-[#d4d4d4]" />
      <div className="h-[46px] w-[46px] rounded-full border-[4px] border-[#d4d4d4]" />
      <svg width="40" height="48" viewBox="0 0 40 48">
        <path d="M37 3V45L3 24Z" fill="none" stroke="#d4d4d4" strokeWidth="4" strokeLinejoin="round" />
      </svg>
    </div>
  );
}

export default function App() {
  return (
    <div className="flex h-[2340px] w-[1080px] flex-col overflow-hidden bg-white font-[Roboto,'Noto_Sans_CJK_SC',sans-serif]">
      <StatusBar />
      <Header />
      <InfoPanel />
      <Tabs />
      <SubLine />
      <div className="flex h-[1188px] shrink-0">
        <LeftColumn />
        <RightColumn />
      </div>
      <Summary />
      <TabBar />
      <NavBar />
    </div>
  );
}
